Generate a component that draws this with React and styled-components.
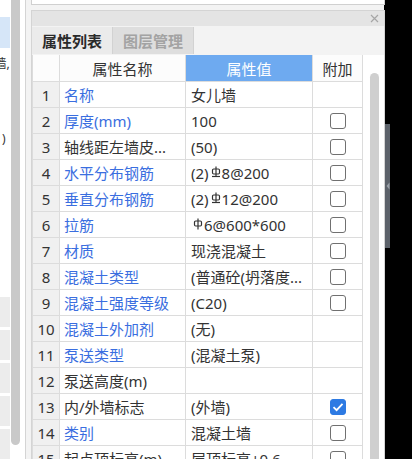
import React from 'react';
import styled, { createGlobalStyle } from 'styled-components';

const GlobalStyle = createGlobalStyle`
  html, body { margin: 0; padding: 0; background: #000; }
  body { font-family: "Noto Sans", "Noto Sans CJK SC", sans-serif; }
`;

const rows = [
  { name: '名称', value: '女儿墙', link: true, box: null },
  { name: '厚度(mm)', value: '100', link: true, box: false },
  { name: '轴线距左墙皮...', value: '(50)', link: false, box: false },
  { name: '水平分布钢筋', value: ['(2)', 'hrb', '8@200'], link: true, box: false },
  { name: '垂直分布钢筋', value: ['(2)', 'hrb', '12@200'], link: true, box: false },
  { name: '拉筋', value: ['', 'hpb', '6@600*600'], link: true, box: false },
  { name: '材质', value: '现浇混凝土', link: true, box: false },
  { name: '混凝土类型', value: '(普通砼(坍落度...', link: true, box: false },
  { name: '混凝土强度等级', value: '(C20)', link: true, box: false },
  { name: '混凝土外加剂', value: '(无)', link: true, box: null },
  { name: '泵送类型', value: '(混凝土泵)', link: true, box: null },
  { name: '泵送高度(m)', value: '', link: false, box: null },
  { name: '内/外墙标志', value: '(外墙)', link: false, box: true },
  { name: '类别', value: '混凝土墙', link: true, box: false },
  { name: '起点顶标高(m)', value: '层顶标高+0.6', link: false, box: false },
];

function Rebar({ kind }) {
  return (
    <RebarMark width="10" height="12" viewBox="0 0 10 12">
      <rect x="1.5" y="3" width="7" height="5" rx="1.2" fill="none" stroke="#333" strokeWidth="1.2" />
      <line x1="5" y1="0.5" x2="5" y2={kind === 'hrb' ? 10 : 11.5} stroke="#333" strokeWidth="1.2" />
      {kind === 'hrb' && <line x1="1" y1="10.5" x2="9" y2="10.5" stroke="#333" strokeWidth="1.2" />}
    </RebarMark>
  );
}

function Check({ checked }) {
  return (
    <CheckBox $checked={checked}>
      {checked && (
        <svg width="12" height="10" viewBox="0 0 12 10">
          <path d="M1.5 5.2 L4.6 8.2 L10.5 1.8" fill="none" stroke="#fff" strokeWidth="1.8" />
        </svg>
      )}
    </CheckBox>
  );
}

export default function App() {
  return (
    <Screen>
      <GlobalStyle />
      <LeftPane>
        <LeftList>
          <LeftItem $h={17} />
          <LeftItem $h={31} $bg="#d6e6f8" />
          <LeftText $h={30}>女儿墙,</LeftText>
          <LeftItem $h={45} />
          <LeftText $h={30} $pad={4}>)</LeftText>
          <LeftItem $h={144} />
          <LeftBlock />
          <LeftBlock />
          <LeftBlock />
          <LeftBlock />
          <LeftBlock />
        </LeftList>
        <LeftTrack>
          <Thumb />
        </LeftTrack>
      </LeftPane>
      <MainPane>
        <TopBox />
        <Panel>
          <TitleBar>
            <svg width="9" height="9" viewBox="0 0 9 9">
              <path d="M1 1 L8 8 M8 1 L1 8" stroke="#a6a6a6" strokeWidth="1.2" />
            </svg>
          </TitleBar>
          <TabBar>
            <Tab $active>属性列表</Tab>
            <Tab>图层管理</Tab>
          </TabBar>
          <Body>
            <Grid>
              <HeadCell />
              <HeadCell>属性名称</HeadCell>
              <HeadCell $blue>属性值</HeadCell>
              <HeadCell>附加</HeadCell>
              {rows.map((r, i) => (
                <React.Fragment key={i}>
                  <NumCell>{i + 1}</NumCell>
                  <NameCell $link={r.link}>{r.name}</NameCell>
                  <ValueCell>
                    {Array.isArray(r.value) ? (
                      <>
                        {r.value[0]}
                        <Rebar kind={r.value[1]} />
                        {r.value[2]}
                      </>
                    ) : (
                      r.value
                    )}
                  </ValueCell>
                  <BoxCell>{r.box !== null && <Check checked={r.box} />}</BoxCell>
                </React.Fragment>
              ))}
            </Grid>
            <ScrollArea>
              <PanelThumb />
            </ScrollArea>
          </Body>
        </Panel>
      </MainPane>
      <SideStrip>
        <SideTab>
          <svg width="4" height="8" viewBox="0 0 4 8">
            <path d="M3.5 0.5 L0.5 4 L3.5 7.5 Z" fill="#9aa0a8" />
          </svg>
        </SideTab>
      </SideStrip>
    </Screen>
  );
}

const Screen = styled.div`
  width: 412px;
  height: 459px;
  display: flex;
  background: #000;
  overflow: hidden;
`;

const LeftPane = styled.div`
  width: 25px;
  flex: none;
  display: flex;
  background: #fff;
  border-right: 1px solid #d4d4d4;
`;

const LeftList = styled.div`
  width: 10px;
  display: flex;
  flex-direction: column;
  overflow: hidden;
`;

const LeftItem = styled.div`
  height: ${(p) => p.$h}px;
  flex: none;
  background: ${(p) => p.$bg || '#fff'};
`;

const LeftText = styled.div`
  height: ${(p) => p.$h}px;
  flex: none;
  display: flex;
  justify-content: flex-end;
  align-items: center;
  padding-right: ${(p) => p.$pad || 0}px;
  font-size: 12px;
  color: #333;
  white-space: nowrap;
`;

const LeftBlock = styled.div`
  height: 30px;
  flex: none;
  margin-bottom: 3px;
  background: #ececec;
`;

const LeftTrack = styled.div`
  width: 15px;
  padding-left: 1px;
`;

const Thumb = styled.div`
  width: 9px;
  height: 445px;
  background: #c9c9c9;
  border-radius: 0 0 5px 5px;
`;

const MainPane = styled.div`
  width: 358px;
  flex: none;
  background: #f3f3f3;
  padding-left: 5px;
  box-sizing: border-box;
  display: flex;
  flex-direction: column;
  min-height: 0;
`;

const TopBox = styled.div`
  flex: none;
  height: 4px;
  width: 352px;
  background: #fff;
  border: 1px solid #d0d0d0;
  border-top: none;
  margin-bottom: 5px;
`;

const Panel = styled.div`
  width: 352px;
  flex: 1;
  min-height: 0;
  overflow: hidden;
  border: 1px solid #d4d4d4;
  border-bottom: none;
  background: #f7f7f7;
  display: flex;
  flex-direction: column;
`;

const TitleBar = styled.div`
  flex: none;
  height: 15px;
  background: #e4e4e4;
  display: flex;
  justify-content: flex-end;
  align-items: center;
  padding-right: 5px;
`;

const TabBar = styled.div`
  flex: none;
  height: 29px;
  display: flex;
  align-items: flex-start;
  padding-top: 1px;
  box-sizing: border-box;
  background: #f3f3f3;
`;

const Tab = styled.div`
  width: 80px;
  height: 27px;
  display: flex;
  align-items: center;
  justify-content: center;
  font-size: 15px;
  font-weight: 700;
  font-family: "Noto Sans CJK SC", sans-serif;
  color: ${(p) => (p.$active ? '#2a2a2a' : '#a3a3a3')};
  background: ${(p) => (p.$active ? '#ebebeb' : '#dedede')};
  border-right: 1px solid #d2d2d2;
`;

const Body = styled.div`
  flex: none;
  display: flex;
  background: #fff;
`;

const Grid = styled.div`
  display: grid;
  grid-template-columns: 27px 126px 127px 50px;
  grid-auto-rows: 26px;
  grid-template-rows: 27px;
  align-content: start;
  border-left: 1px solid #dcdcdc;
  font-size: 15px;
  color: #333;
`;

const Cell = styled.div`
  border-right: 1px solid #dcdcdc;
  border-bottom: 1px solid #dcdcdc;
  display: flex;
  align-items: center;
  white-space: nowrap;
  overflow: hidden;
  font-family: "Noto Sans", "Noto Sans CJK SC", sans-serif;
`;

const HeadCell = styled(Cell)`
  justify-content: center;
  background: ${(p) => (p.$blue ? '#6eaaf0' : '#fcfcfc')};
  color: ${(p) => (p.$blue ? '#fff' : '#333')};
`;

const NumCell = styled(Cell)`
  justify-content: center;
  background: #f0f0f0;
  color: #333;
`;

const NameCell = styled(Cell)`
  padding-left: 4px;
  color: ${(p) => (p.$link ? '#3a6ee0' : '#333')};
`;

const ValueCell = styled(Cell)`
  padding-left: 5px;
`;

const BoxCell = styled(Cell)`
  justify-content: center;
`;

const RebarMark = styled.svg`
  align-self: flex-start;
  margin: 6px 1px 0 2px;
  flex: none;
`;

const CheckBox = styled.span`
  width: 14px;
  height: 14px;
  border: 1.5px solid ${(p) => (p.$checked ? '#2d7ae3' : '#707070')};
  border-radius: 3px;
  background: ${(p) => (p.$checked ? '#2d7ae3' : '#fff')};
  display: flex;
  align-items: center;
  justify-content: center;
`;

const ScrollArea = styled.div`
  flex: 1;
  display: flex;
  justify-content: center;
  padding-top: 18px;
  padding-left: 1px;
`;

const PanelThumb = styled.div`
  width: 9px;
  background: #cfcfcf;
  border-radius: 5px 5px 0 0;
`;

const SideStrip = styled.div`
  width: 5px;
  flex: none;
  margin-left: 1px;
  background: #000;
  padding-top: 124px;
`;

const SideTab = styled.div`
  height: 124px;
  background: #5c626a;
  display: flex;
  align-items: center;
  justify-content: center;
`;
